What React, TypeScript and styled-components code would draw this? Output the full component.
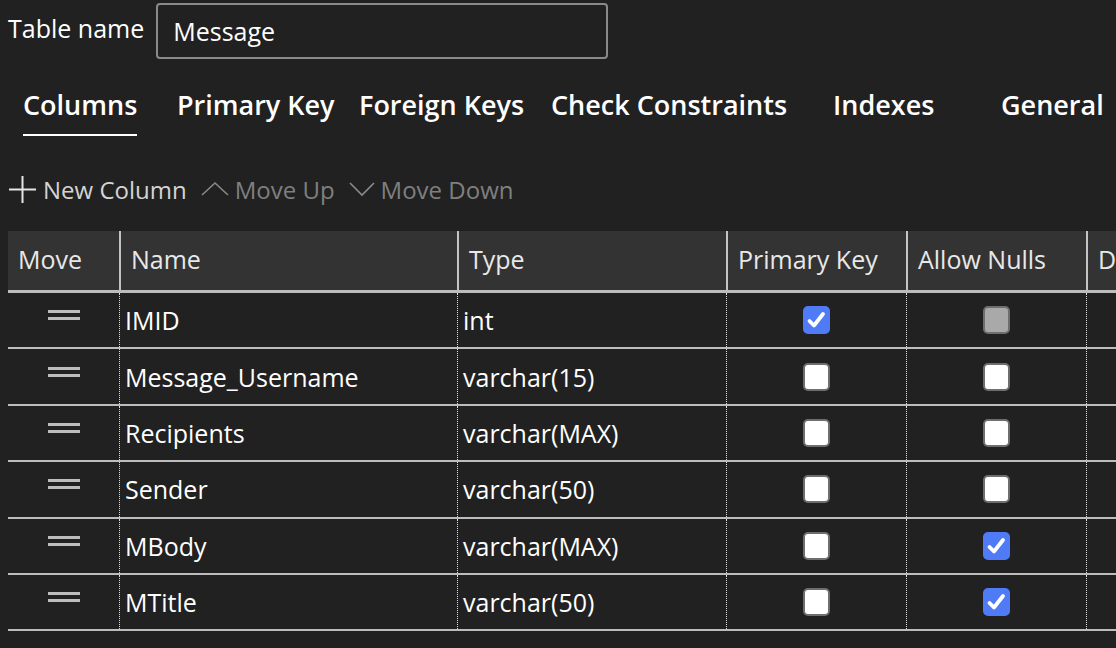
import styled, { createGlobalStyle } from "styled-components";

const GlobalStyle = createGlobalStyle`
  html, body {
    margin: 0;
    padding: 0;
    background: #212121;
    overflow: hidden;
  }
  body {
    font-family: "Open Sans", "Noto Sans", sans-serif;
    color: #ffffff;
  }
`;

const Page = styled.div`
  width: 1116px;
  height: 648px;
  padding: 3px 0 0 8px;
  box-sizing: border-box;
  overflow: hidden;
`;

const NameRow = styled.div`
  display: flex;
  align-items: center;
  gap: 12px;
  height: 56px;
`;

const Label = styled.label`
  font-size: 25px;
  margin-top: -6px;
`;

const NameInput = styled.div`
  width: 452px;
  height: 56px;
  box-sizing: border-box;
  border: 2px solid #8a8a8a;
  border-radius: 4px;
  display: flex;
  align-items: center;
  padding-left: 15px;
  font-size: 25px;
`;

const Tabs = styled.div`
  display: flex;
  margin-top: 28px;
  padding-left: 15px;
  height: 62px;
`;

const Tab = styled.div<{ $width: number }>`
  flex: 0 0 ${(p) => p.$width}px;
  font-size: 27px;
  font-weight: 600;
  white-space: nowrap;
  line-height: 36px;
`;

const TabLabel = styled.span<{ $active?: boolean }>`
  display: inline-block;
  padding-bottom: 11px;
  border-bottom: 2px solid ${(p) => (p.$active ? "#ffffff" : "transparent")};
`;

const Toolbar = styled.div`
  display: flex;
  align-items: center;
  height: 36px;
  margin-top: 22px;
  gap: 14px;
`;

const ToolButton = styled.div<{ $disabled?: boolean }>`
  display: flex;
  align-items: center;
  gap: 6px;
  font-size: 24px;
  color: ${(p) => (p.$disabled ? "#7f7f7f" : "#d4d4d4")};
  svg {
    flex: none;
  }
`;

const Table = styled.div`
  margin-top: 24px;
  width: 1300px;
`;

const GRID = "111px 338px 269px 180px 180px 192px";

const HeaderRow = styled.div`
  display: grid;
  grid-template-columns: ${GRID};
  height: 59px;
  background: #333333;
  border-bottom: 3px solid #bdbdbd;
`;

const HeaderCell = styled.div<{ $first?: boolean }>`
  display: flex;
  align-items: center;
  padding-left: 10px;
  padding-bottom: 3px;
  font-size: 25px;
  color: #e8e8e8;
  white-space: nowrap;
  overflow: hidden;
  border-left: ${(p) => (p.$first ? "none" : "2px solid #c4c4c4")};
`;

const Row = styled.div`
  display: grid;
  grid-template-columns: ${GRID};
  height: 54.4px;
  border-bottom: 2px solid #bdbdbd;
`;

const Cell = styled.div<{ $first?: boolean; $center?: boolean }>`
  display: flex;
  align-items: center;
  justify-content: ${(p) => (p.$center ? "center" : "flex-start")};
  padding-left: ${(p) => (p.$center ? "0" : "5px")};
  font-size: 25px;
  border-left: ${(p) => (p.$first ? "none" : "1px dotted #e0e0e0")};
`;

const Handle = styled.div`
  width: 32px;
  height: 10px;
  margin-top: -10px;
  border-top: 3px solid #bdbdbd;
  border-bottom: 3px solid #bdbdbd;
  box-sizing: border-box;
`;

type BoxState = "on" | "off" | "disabled";

const Box = styled.div<{ $state: BoxState }>`
  width: 27px;
  height: 28px;
  box-sizing: border-box;
  border-radius: 5px;
  display: flex;
  align-items: center;
  justify-content: center;
  background: ${(p) =>
    p.$state === "on" ? "#4f7cf6" : p.$state === "disabled" ? "#a9a9a9" : "#ffffff"};
  border: 2px solid ${(p) => (p.$state === "on" ? "#4f7cf6" : "#6e6e6e")};
`;

function Checkbox({ state }: { state: BoxState }) {
  return (
    <Box $state={state}>
      {state === "on" && (
        <svg width="23" height="24" viewBox="0 0 23 24">
          <path
            d="M4.5 13 L9 17.5 L18 6"
            fill="none"
            stroke="#fff"
            strokeWidth="3.8"
            strokeLinecap="round"
            strokeLinejoin="round"
          />
        </svg>
      )}
    </Box>
  );
}

const tabs = [
  { label: "Columns", width: 154, active: true },
  { label: "Primary Key", width: 182 },
  { label: "Foreign Keys", width: 192 },
  { label: "Check Constraints", width: 282 },
  { label: "Indexes", width: 168 },
  { label: "General", width: 140 },
];

const columns: { name: string; type: string; pk: BoxState; nulls: BoxState }[] = [
  { name: "IMID", type: "int", pk: "on", nulls: "disabled" },
  { name: "Message_Username", type: "varchar(15)", pk: "off", nulls: "off" },
  { name: "Recipients", type: "varchar(MAX)", pk: "off", nulls: "off" },
  { name: "Sender", type: "varchar(50)", pk: "off", nulls: "off" },
  { name: "MBody", type: "varchar(MAX)", pk: "off", nulls: "on" },
  { name: "MTitle", type: "varchar(50)", pk: "off", nulls: "on" },
];

export default function App() {
  return (
    <Page>
      <GlobalStyle />
      <NameRow>
        <Label>Table name</Label>
        <NameInput>Message</NameInput>
      </NameRow>

      <Tabs>
        {tabs.map((t) => (
          <Tab key={t.label} $width={t.width}>
            <TabLabel $active={t.active}>{t.label}</TabLabel>
          </Tab>
        ))}
      </Tabs>

      <Toolbar>
        <ToolButton>
          <svg width="29" height="29" viewBox="0 0 29 29">
            <path d="M14.5 1 V28 M1 14.5 H28" stroke="#e6e6e6" strokeWidth="2" />
          </svg>
          New Column
        </ToolButton>
        <ToolButton $disabled>
          <svg width="28" height="16" viewBox="0 0 28 16">
            <path d="M1 14 L14 2 L27 14" fill="none" stroke="#8a8a8a" strokeWidth="1.6" />
          </svg>
          Move Up
        </ToolButton>
        <ToolButton $disabled>
          <svg width="26" height="16" viewBox="0 0 26 16">
            <path d="M1 2 L13 14 L25 2" fill="none" stroke="#8a8a8a" strokeWidth="1.6" />
          </svg>
          Move Down
        </ToolButton>
      </Toolbar>

      <Table>
        <HeaderRow>
          <HeaderCell $first>Move</HeaderCell>
          <HeaderCell>Name</HeaderCell>
          <HeaderCell>Type</HeaderCell>
          <HeaderCell>Primary Key</HeaderCell>
          <HeaderCell>Allow Nulls</HeaderCell>
          <HeaderCell>Default Value</HeaderCell>
        </HeaderRow>
        {columns.map((c) => (
          <Row key={c.name}>
            <Cell $first $center>
              <Handle />
            </Cell>
            <Cell>{c.name}</Cell>
            <Cell>{c.type}</Cell>
            <Cell $center>
              <Checkbox state={c.pk} />
            </Cell>
            <Cell $center>
              <Checkbox state={c.nulls} />
            </Cell>
            <Cell />
          </Row>
        ))}
      </Table>
    </Page>
  );
}
